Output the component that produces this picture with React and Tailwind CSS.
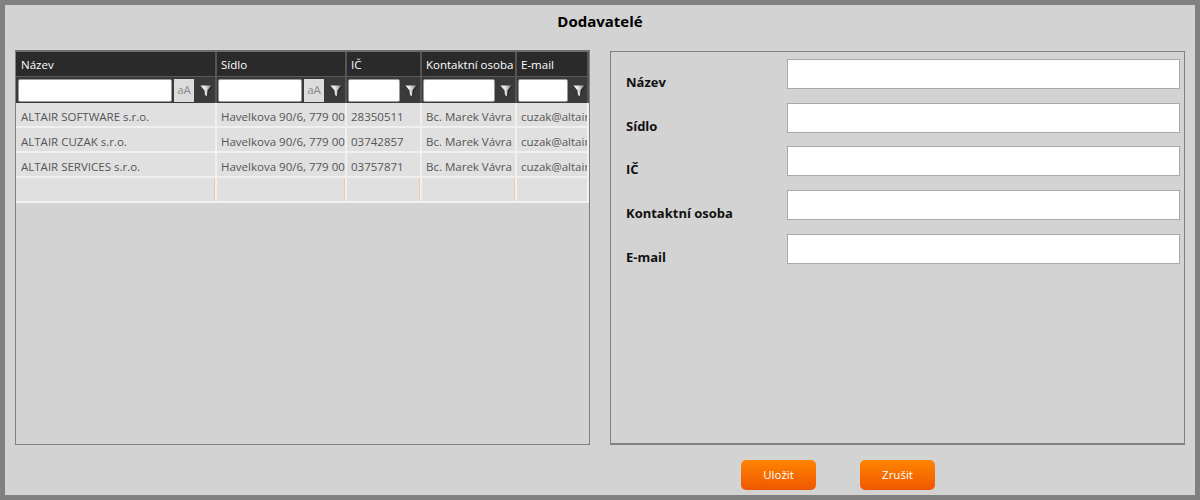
import React from 'react';

const columns = [
  { name: 'Název', width: 'w-[201px]', input: 'w-[154px]', caseToggle: true, filterPad: 'pl-[2px]', textPad: 'pl-[5px]' },
  { name: 'Sídlo', width: 'w-[130px]', input: 'w-[84px]', caseToggle: true, filterPad: 'pl-[1px]', textPad: 'pl-[4px]' },
  { name: 'IČ', width: 'w-[75px]', input: 'w-[52px]', filterPad: 'pl-[1px]', textPad: 'pl-[4px]' },
  { name: 'Kontaktní osoba', width: 'w-[95px]', input: 'w-[72px]', filterPad: 'pl-[1px]', textPad: 'pl-[4px]' },
  { name: 'E-mail', width: 'w-[72px]', input: 'w-[50px]', filterPad: 'pl-[1px]', textPad: 'pl-[4px]' },
];

const rows = [
  ['ALTAIR SOFTWARE s.r.o.', 'Havelkova 90/6, 779 00 Olomouc', '28350511', 'Bc. Marek Vávra', 'cuzak@altair.cz'],
  ['ALTAIR CUZAK s.r.o.', 'Havelkova 90/6, 779 00 Olomouc', '03742857', 'Bc. Marek Vávra', 'cuzak@altair.cz'],
  ['ALTAIR SERVICES s.r.o.', 'Havelkova 90/6, 779 00 Olomouc', '03757871', 'Bc. Marek Vávra', 'cuzak@altair.cz'],
  ['', '', '', '', ''],
];

const fields = ['Název', 'Sídlo', 'IČ', 'Kontaktní osoba', 'E-mail'];

function FilterIcon({ id }) {
  return (
    <svg width="13" height="13" viewBox="0 0 13 13" className="shrink-0">
      <defs>
        <linearGradient id={id} x1="0" y1="0" x2="1" y2="0">
          <stop offset="0" stopColor="#ffffff" />
          <stop offset="0.5" stopColor="#dddddd" />
          <stop offset="1" stopColor="#6e6e6e" />
        </linearGradient>
      </defs>
      <path d="M1.5 1.5 L12.5 1.5 L8.5 6.5 L8 12.5 L6 11 L5.5 6.5 Z" fill="#000000" opacity="0.45" />
      <path d="M0.5 0.5 L11.5 0.5 L7.5 5.5 L7 11.5 L5 10 L4.5 5.5 Z" fill={`url(#${id})`} />
    </svg>
  );
}

function FilterCell({ col, id }) {
  return (
    <div className={`${col.width} ${col.filterPad} flex h-[26px] shrink-0 items-center border-r-2 border-[#555555]`}>
      <div className={`${col.input} h-[23px] shrink-0 rounded-[2px] border border-[#9a9a9a] bg-white`} />
      {col.caseToggle && (
        <div className="ml-[2px] flex h-[23px] w-[20px] shrink-0 items-center justify-center bg-[#dcdcdc] text-[11.5px] text-[#8a8a8a]">
          aA
        </div>
      )}
      <div className="flex flex-1 justify-center pl-[3px] pt-[2px]">
        <FilterIcon id={id} />
      </div>
    </div>
  );
}

function Table() {
  return (
    <div className="h-[395px] w-[575px] shrink-0 overflow-hidden border border-[#808080] border-t-2 border-t-[#6e6e6e]">
      <div className="flex h-[24px] bg-[#2a2a2a]">
        {columns.map((col) => (
          <div key={col.name} className={`${col.width} ${col.textPad} flex shrink-0 items-center overflow-hidden whitespace-nowrap border-r-2 border-[#555555] pt-[2px] text-[11.5px] text-white`}>
            {col.name}
          </div>
        ))}
      </div>
      <div className="flex h-[27px] border-t border-[#5a5a5a] bg-[#3a3a3a]">
        {columns.map((col, i) => (
          <FilterCell key={col.name} col={col} id={`filter-${i}`} />
        ))}
      </div>
      {rows.map((row, i) => (
        <div key={i} className="flex h-[25px]">
          {row.map((value, j) => (
            <div key={j} className={`${columns[j].width} ${columns[j].textPad} ${i === 3 && j < 4 ? 'shadow-[inset_-1px_0_0_#eec6a8]' : ''} flex shrink-0 items-center overflow-hidden whitespace-nowrap border-b-2 border-r-2 border-[#f0f0f0] bg-[#e0e0e0] pr-[3px] pt-[5px] text-[11.5px] text-[#555555]`}>
              {value}
            </div>
          ))}
        </div>
      ))}
    </div>
  );
}

function Form() {
  return (
    <div className="mt-[1px] flex h-[394px] w-[575px] shrink-0 flex-col gap-[13.7px] border border-[#808080] border-b-2 pr-[4px] pt-[7px]">
      {fields.map((label) => (
        <div key={label} className="flex h-[30px] shrink-0">
          <div className="w-[176px] shrink-0 pl-[15px] pt-[14px] text-[13px] leading-[18px] font-bold text-[#111111]">{label}</div>
          <div className="h-[30px] flex-1 border border-[#a9a9a9] bg-white" />
        </div>
      ))}
    </div>
  );
}

export default function App() {
  return (
    <div className="flex h-[500px] w-[1200px] flex-col border-[5px] border-[#808080] bg-[#d3d3d3] font-['Open_Sans','Noto_Sans',sans-serif]">
      <div className="h-[40px] shrink-0 pt-[6px] text-center text-[15px] leading-[20px] font-bold text-black">Dodavatelé</div>
      <div className="mt-[5px] flex gap-[20px] pl-[10px]">
        <Table />
        <Form />
      </div>
      <div className="mt-[15px] flex gap-[44px] pl-[736px]">
        <button className="h-[30px] w-[75px] rounded-[5px] bg-gradient-to-b from-[#ff8400] to-[#ef5600] text-[11.5px] text-white">Uložit</button>
        <button className="h-[30px] w-[75px] rounded-[5px] bg-gradient-to-b from-[#ff8400] to-[#ef5600] text-[11.5px] text-white">Zrušit</button>
      </div>
    </div>
  );
}
